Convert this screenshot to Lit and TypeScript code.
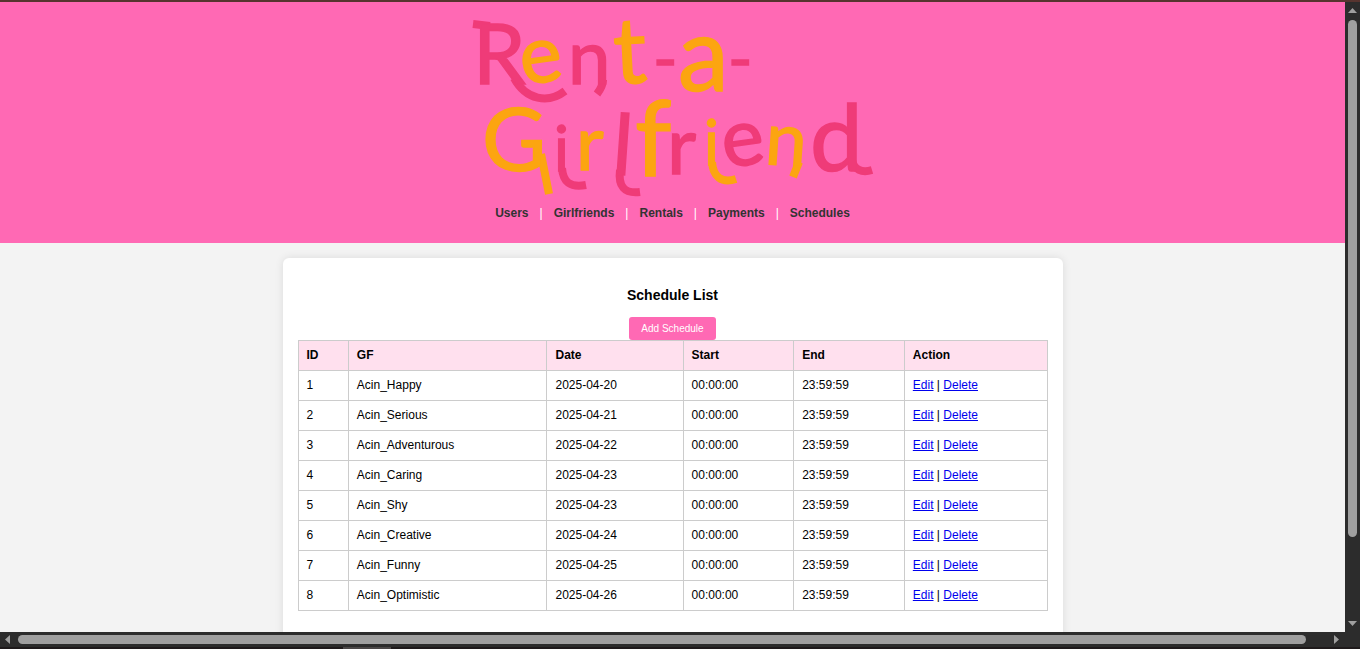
import { LitElement, html, svg, css } from "lit";
import { customElement } from "lit/decorators.js";

type Letter = { c: string; x: number; y: number; size: number; tone: "rose" | "amber"; turn?: number };

const LETTERS: Letter[] = [
  { c: "R", x: 1, y: 70, size: 84, tone: "rose" },
  { c: "e", x: 51, y: 71, size: 80, tone: "amber", turn: -8 },
  { c: "n", x: 96, y: 70, size: 76, tone: "rose" },
  { c: "t", x: 143, y: 70, size: 92, tone: "amber", turn: -3 },
  { c: "-", x: 181, y: 68, size: 66, tone: "rose" },
  { c: "a", x: 206, y: 77, size: 102, tone: "amber" },
  { c: "-", x: 256, y: 68, size: 66, tone: "rose" },
  { c: "G", x: 10, y: 157, size: 88, tone: "amber" },
  { c: "i", x: 82, y: 157, size: 62, tone: "rose" },
  { c: "r", x: 104, y: 156, size: 76, tone: "amber" },
  { c: "l", x: 139, y: 160, size: 84, tone: "rose", turn: 4 },
  { c: "f", x: 163, y: 162, size: 104, tone: "amber" },
  { c: "r", x: 195, y: 160, size: 80, tone: "rose" },
  { c: "i", x: 232, y: 151, size: 62, tone: "amber" },
  { c: "e", x: 253, y: 154, size: 80, tone: "rose", turn: -8 },
  { c: "n", x: 292, y: 150, size: 74, tone: "amber", turn: 4 },
  { c: "d", x: 338, y: 157, size: 94, tone: "rose" },
];

const SWASHES: { d: string; tone: "rose" | "amber" }[] = [
  { d: "M1 10L18 12", tone: "rose" },
  { d: "M42 64C54 86 76 90 93 77", tone: "rose" },
  { d: "M131 66C131 72 128 76 125 80", tone: "rose" },
  { d: "M69 140L77 180", tone: "amber" },
  { d: "M90 154C91 168 98 174 114 171", tone: "rose" },
  { d: "M148 156C146 172 152 180 168 178", tone: "rose" },
  { d: "M240 148C241 162 249 170 264 165", tone: "amber" },
  { d: "M327 148L321 163", tone: "amber" },
  { d: "M380 146C382 156 390 159 400 156", tone: "rose" },
];

@customElement("brand-logo")
class BrandLogo extends LitElement {
  static styles = css`
    :host { display: block; width: 402px; max-width: 100%; }
    svg { display: block; width: 100%; height: auto; overflow: visible; }
    .letter { font-family: Lato, sans-serif; stroke-width: 1.5; }
    .rose { fill: #ef3b78; stroke: #ef3b78; }
    .amber { fill: #fca510; stroke: #fca510; }
    .swash { fill: none; stroke-width: 8; }
  `;
  render() {
    return html`<svg viewBox="0 0 402 184">
      ${SWASHES.map((s) => svg`<path class="${s.tone} swash" d=${s.d}></path>`)}
      ${LETTERS.map(
        (l) => svg`<text class="letter ${l.tone}" x=${l.x} y=${l.y} font-size=${l.size} rotate=${l.turn ?? 0}>${l.c}</text>`
      )}
    </svg>`;
  }
}

const NAMES = ["Happy", "Serious", "Adventurous", "Caring", "Shy", "Creative", "Funny", "Optimistic"];
const DAYS = [20, 21, 22, 23, 23, 24, 25, 26];
const ROWS = NAMES.map((name, i) => ({ id: i + 1, gf: `Acin_${name}`, date: `2025-04-${DAYS[i]}` }));
const LINKS = ["Users", "Girlfriends", "Rentals", "Payments", "Schedules"];

@customElement("app-root")
class AppRoot extends LitElement {
  static styles = css`
    :host {
      display: grid;
      grid-template-columns: minmax(0, 1fr) 15px;
      grid-template-rows: 2px minmax(0, 1fr) 15px 2px;
      height: 100vh;
      overflow: hidden;
      background: #2c2c2c;
      font-family: "Liberation Sans", Arial, sans-serif;
      font-size: 12px;
      line-height: 14px;
      color: #000;
    }
    .edge { grid-column: 1 / -1; background: #57342f; }
    .edge.low { background: #1e1a1b; }
    .task { width: 48px; height: 2px; margin-left: 343px; background: #4a4747; }
    .page { background: #f3f3f3; overflow: hidden; }
    header {
      display: flex;
      flex-direction: column;
      align-items: center;
      gap: 8px;
      padding: 12px 0 23px;
      background: #ff69b4;
    }
    nav { display: flex; gap: 11px; color: #fff; }
    nav a { color: #333; font-weight: bold; text-decoration: none; }
    .card {
      box-sizing: border-box;
      max-width: 780px;
      margin: 15px auto;
      padding: 30px 15px;
      display: flex;
      flex-direction: column;
      align-items: center;
      background: #fff;
      border-radius: 6px;
      box-shadow: 0 0 8px rgba(0, 0, 0, 0.1);
    }
    h1 { margin: 0 0 14px; font-size: 14px; line-height: 15px; }
    button {
      padding: 6px 12px;
      border: 0;
      border-radius: 3px;
      background: #ff69b4;
      color: #fff;
      font: 10px/11px "Liberation Sans", Arial, sans-serif;
    }
    table { width: 100%; border-collapse: collapse; }
    th, td { padding: 7px 8px 8px; border: 1px solid #ccc; text-align: left; }
    th { background: #ffe0ee; }
    td a { color: #0000ee; }
    .bar { display: flex; align-items: center; justify-content: space-between; }
    .bar.down { flex-direction: column; padding: 6px 0; }
    .bar.across { grid-column: 1 / -1; padding: 0 21px 0 5px; }
    .track { flex: 1; }
    .down .track { width: 9px; margin: 7px 0; }
    .across .track { height: 9px; margin: 0 8px; }
    .thumb { border-radius: 5px; background: #9f9f9f; }
    .down .thumb { height: 87%; }
    .across .thumb { height: 9px; width: 98.5%; }
    .arrow { display: block; fill: #9f9f9f; }
  `;
  render() {
    return html`
      <div class="edge"></div>
      <div class="page">
        <header>
          <brand-logo></brand-logo>
          <nav>
            ${LINKS.map((l, i) => html`${i ? html`<span>|</span>` : ""}<a href="#${l.toLowerCase()}">${l}</a>`)}
          </nav>
        </header>
        <main class="card">
          <h1>Schedule List</h1>
          <button type="button">Add Schedule</button>
          <table>
            <thead>
              <tr>${["ID", "GF", "Date", "Start", "End", "Action"].map((h) => html`<th scope="col">${h}</th>`)}</tr>
            </thead>
            <tbody>
              ${ROWS.map(
                (r) => html`<tr>
                  <td>${r.id}</td><td>${r.gf}</td><td>${r.date}</td><td>00:00:00</td><td>23:59:59</td>
                  <td><a href="#edit-${r.id}">Edit</a> | <a href="#delete-${r.id}">Delete</a></td>
                </tr>`
              )}
            </tbody>
          </table>
        </main>
      </div>
      <div class="bar down" aria-hidden="true">
        <svg class="arrow" width="9" height="5"><path d="M0 5L4.500 0L9 5Z"></path></svg>
        <div class="track"><div class="thumb"></div></div>
        <svg class="arrow" width="9" height="5"><path d="M0 0L4.500 5L9 0Z"></path></svg>
      </div>
      <div class="bar across" aria-hidden="true">
        <svg class="arrow" width="5" height="9"><path d="M5 0L0 4.500L5 9Z"></path></svg>
        <div class="track"><div class="thumb"></div></div>
        <svg class="arrow" width="5" height="9"><path d="M0 0L5 4.500L0 9Z"></path></svg>
      </div>
      <div class="edge low"><div class="task"></div></div>
    `;
  }
}
